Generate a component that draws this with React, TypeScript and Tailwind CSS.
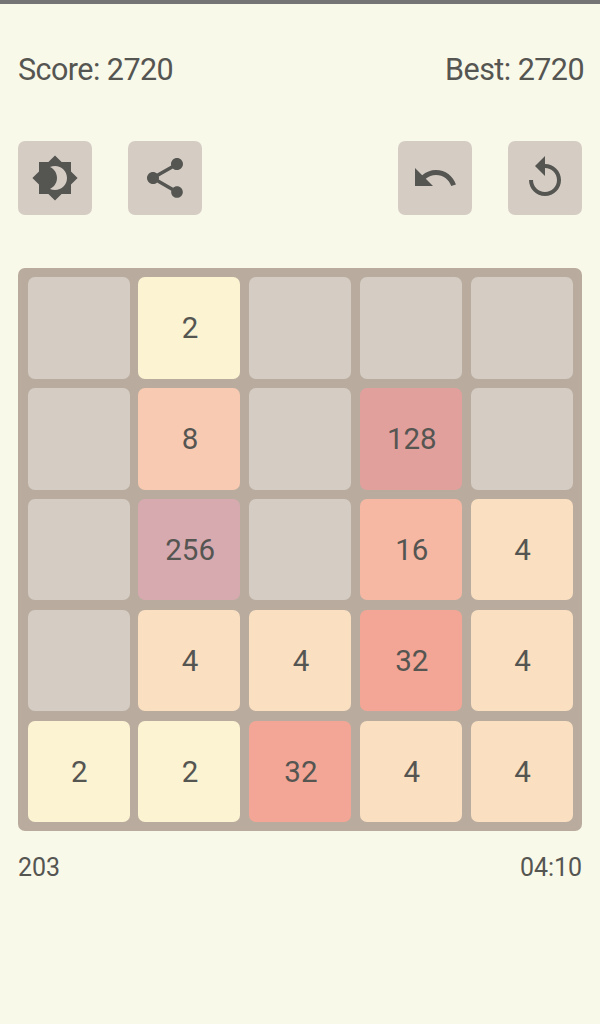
const cells: (number | null)[] = [
  null, 2, null, null, null,
  null, 8, null, 128, null,
  null, 256, null, 16, 4,
  null, 4, 4, 32, 4,
  2, 2, 32, 4, 4,
];

function tileClass(v: number | null): string {
  switch (v) {
    case 2: return "bg-[#fcf3d2]";
    case 4: return "bg-[#fae0c1]";
    case 8: return "bg-[#f8cab1]";
    case 16: return "bg-[#f6b8a3]";
    case 32: return "bg-[#f3a695]";
    case 128: return "bg-[#e2a09d]";
    case 256: return "bg-[#d7aab0]";
    default: return "bg-[#d5cdc4]";
  }
}

const icons = {
  theme: "M20 8.69V4h-4.69L12 .69 8.69 4H4v4.69L.69 12 4 15.31V20h4.69L12 23.31 15.31 20H20v-4.69L23.31 12 20 8.69zM12 18c-.89 0-1.74-.2-2.5-.55C11.56 16.5 13 14.42 13 12s-1.44-4.5-3.5-5.45C10.26 6.2 11.11 6 12 6c3.31 0 6 2.69 6 6s-2.69 6-6 6z",
  share: "M18 16.08c-.76 0-1.44.3-1.96.77L8.91 12.7c.05-.23.09-.46.09-.7s-.04-.47-.09-.7l7.05-4.11c.54.5 1.25.81 2.04.81 1.66 0 3-1.34 3-3s-1.34-3-3-3-3 1.34-3 3c0 .24.04.47.09.7L8.04 9.81C7.5 9.31 6.79 9 6 9c-1.66 0-3 1.34-3 3s1.34 3 3 3c.79 0 1.5-.31 2.04-.81l7.12 4.16c-.05.21-.08.43-.08.65 0 1.61 1.31 2.92 2.92 2.92 1.61 0 2.92-1.31 2.92-2.92s-1.31-2.92-2.92-2.92z",
  undo: "M12.5 8c-2.65 0-5.05.99-6.9 2.6L2 7v9h9l-3.62-3.62c1.39-1.16 3.16-1.88 5.12-1.88 3.54 0 6.55 2.31 7.6 5.5l2.37-.78C21.08 11.03 17.15 8 12.5 8z",
  replay: "M12 5V1L7 6l5 5V7c3.31 0 6 2.69 6 6s-2.69 6-6 6-6-2.69-6-6H4c0 4.42 3.58 8 8 8s8-3.58 8-8-3.58-8-8-8z",
};

function IconButton({ d }: { d: string }) {
  return (
    <button className="flex h-[74px] w-[74px] items-center justify-center rounded-[7px] bg-[#d5cdc4]">
      <svg viewBox="0 0 24 24" className="h-12 w-12 fill-[#555552]">
        <path d={d} />
      </svg>
    </button>
  );
}

export default function App() {
  return (
    <div className="flex h-[1024px] w-[600px] flex-col bg-[#f9f9ea] font-['Roboto',sans-serif] text-[#555552]">
      <div className="h-1 bg-[#757575]" />
      <div className="flex h-[137px] items-start justify-between pl-[18px] pr-4 pt-[48px] text-[30.5px] leading-9 tracking-[-0.55px]">
        <span>Score: 2720</span>
        <span>Best: 2720</span>
      </div>
      <div className="flex justify-between px-[18px]">
        <div className="flex gap-9">
          <IconButton d={icons.theme} />
          <IconButton d={icons.share} />
        </div>
        <div className="flex gap-9">
          <IconButton d={icons.undo} />
          <IconButton d={icons.replay} />
        </div>
      </div>
      <div className="mx-[18px] mt-[53px] grid h-[563px] grid-cols-5 grid-rows-5 gap-x-[8.8px] gap-y-[9.3px] rounded-[7px] bg-[#b9ac9f] pb-[8.8px] pl-[9.6px] pr-[9.2px] pt-[9px]">
        {cells.map((v, i) => (
          <div
            key={i}
            className={`flex items-center justify-center rounded-[7px] pl-[1.5px] pt-px text-[29.5px] ${tileClass(v)}`}
          >
            {v}
          </div>
        ))}
      </div>
      <div className="mt-[23px] flex justify-between px-[18px] text-[25px] leading-7 tracking-[-0.05px]">
        <span>203</span>
        <span>04:10</span>
      </div>
    </div>
  );
}
